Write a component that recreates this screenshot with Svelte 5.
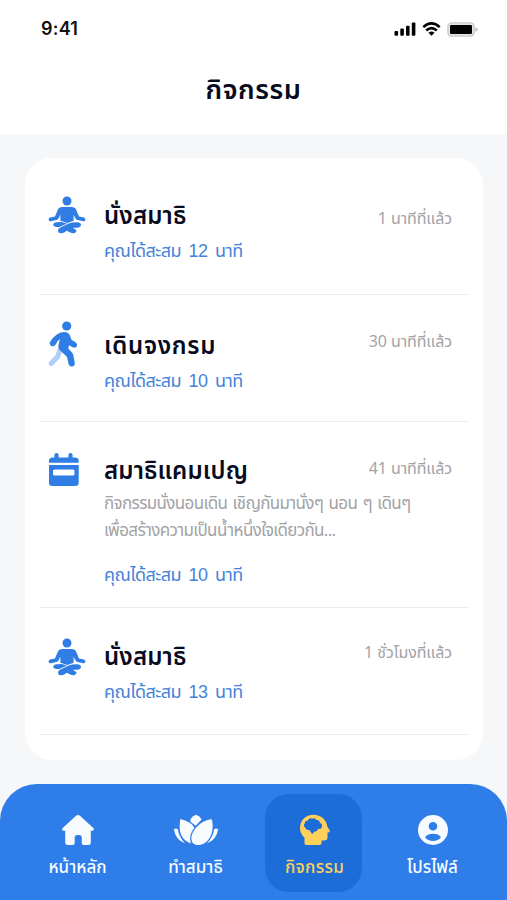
<script>
  const activities = [
    { icon: 'meditate', title: 'นั่งสมาธิ', time: '1 นาทีที่แล้ว', total: 'คุณได้สะสม 12 นาที', size: 'first' },
    { icon: 'walk', title: 'เดินจงกรม', time: '30 นาทีที่แล้ว', total: 'คุณได้สะสม 10 นาที', size: 'second' },
    {
      icon: 'calendar',
      title: 'สมาธิแคมเปญ',
      time: '41 นาทีที่แล้ว',
      lines: ['กิจกรรมนั่งนอนเดิน เชิญกันมานั่งๆ นอน ๆ เดินๆ', 'เพื่อสร้างความเป็นน้ำหนึ่งใจเดียวกัน...'],
      total: 'คุณได้สะสม 10 นาที',
      size: 'third'
    },
    { icon: 'meditate', title: 'นั่งสมาธิ', time: '1 ชั่วโมงที่แล้ว', total: 'คุณได้สะสม 13 นาที', size: 'fourth' }
  ];

  const tabs = [
    { id: 'home', label: 'หน้าหลัก' },
    { id: 'lotus', label: 'ทำสมาธิ' },
    { id: 'activity', label: 'กิจกรรม' },
    { id: 'profile', label: 'โปรไฟล์' }
  ];

  let current = $state('activity');
</script>

<div class="screen">
  <header>
    <div class="status-bar">
      <span class="clock">9:41</span>
      <div class="status-icons">
        <svg width="22" height="14" viewBox="0 0 22 14">
          <rect x="0.5" y="9" width="3.6" height="4.8" rx="1" />
          <rect x="6.3" y="6.5" width="3.6" height="7.3" rx="1" />
          <rect x="12" y="3.7" width="3.6" height="10.1" rx="1" />
          <rect x="17.8" y="0.5" width="3.6" height="13.3" rx="1" />
        </svg>
        <svg width="19" height="14" viewBox="0 0 19 14">
          <path d="M1.3 5.1Q9.5-2.2 17.7 5.1M4.2 8.4Q9.5 3.9 14.8 8.4" fill="none" stroke="#000" stroke-width="2.6" />
          <path d="M6.5 10.7Q9.5 8.2 12.5 10.7L9.5 13.7Z" />
        </svg>
        <svg width="31" height="15" viewBox="0 0 31 15">
          <rect x="0.9" y="0.9" width="26.2" height="13.2" rx="3.8" fill="#e4e4e4" stroke="#c9c9c9" stroke-width="1.4" />
          <rect x="3" y="3" width="22" height="9" rx="1.2" />
          <path d="M28.5 5.2Q30.7 6 30.7 7.5T28.5 9.8Z" fill="#bbb" />
        </svg>
      </div>
    </div>
    <h1>กิจกรรม</h1>
  </header>

  <main>
    <div class="card">
      {#each activities as item}
        <article class={item.size}>
          <div class="icon">
            {#if item.icon === 'meditate'}
              <svg width="38" height="38" viewBox="0 0 38 38">
                <circle cx="19" cy="5" r="4.5" />
                <path d="M14.6 11H23.4Q27.3 11 28.4 14.2L31 20.4 36 21.6Q37.8 22.2 37.3 24 36.8 25.5 35.2 25.2L29.5 23.9Q28 23.5 27.2 22L25.6 18.8V24.8L19.5 27 12.4 24.8V18.8L10.8 22Q10 23.5 8.5 23.9L2.8 25.2Q1.2 25.5.7 24 .2 22.2 2 21.6L7 20.4 9.6 14.2Q10.7 11 14.6 11Z" />
                <path d="M8 31Q5 30.5 5.3 28.3 5.8 26.3 8.6 26.2L13.5 26 19.2 27.6 11.4 31Z" />
                <path d="M28.8 26.2Q33 26.3 33 29 32.9 31.4 29.2 31.7L24.8 31.8 28.5 34.2Q28.4 36.9 25.3 37.3 24 37.4 22.3 36.5L18.8 34.7 16.6 36.2Q15.3 37.3 12.8 37.3 10 37 10 34.5 10.1 32.5 12.4 31.5L20.8 27.6Q23.5 26.2 28.8 26.2Z" />
              </svg>
            {:else if item.icon === 'walk'}
              <svg width="30" height="46" viewBox="0 0 30 46">
                <path d="M12 29L9.6 35.8 3.4 42.3" fill="none" stroke="#b2cdf6" stroke-width="5.2" stroke-linecap="round" stroke-linejoin="round" />
                <circle cx="18.7" cy="5" r="4.6" />
                <path d="M8.5 13.8Q11.5 11 16 11 21.2 11.2 22.4 15.7L23.5 18.8 27.6 21.2Q29.8 23 28.9 25.2 27.4 27.4 24.8 26.3L21 24.2 20.2 27.4 24.2 31.8Q25 32.8 25.3 34L26.8 42Q26.9 45.1 24 45.6 21.3 45.8 20.6 43.1L18.9 35.8 11.9 29.3Q9.8 27.3 10.4 24.5L11.8 18.2Q10.7 18.7 9.8 20.1L7.3 23.9Q5.6 26.1 3.1 25 1 23.6 1.8 21.2 4.2 16.9 8.5 13.8Z" />
              </svg>
            {:else}
              <svg width="32" height="34" viewBox="0 0 32 34">
                <path d="M8.5 0Q10.6 0 10.6 2.2V4.5H20.4V2.2Q20.4 0 22.5 0T24.6 2.2V4.5H27Q30.7 4.5 30.7 8V9.8H1V8Q1 4.5 4.5 4.5H6.4V2.2Q6.4 0 8.5 0Z" />
                <path fill-rule="evenodd" d="M1 12H30.7V29.7Q30.7 33 27.4 33H4.3Q1 33 1 29.7ZM6.5 16.5Q5 16.5 5 18V21Q5 22.5 6.5 22.5H25Q26.5 22.5 26.5 21V18Q26.5 16.5 25 16.5Z" />
              </svg>
            {/if}
          </div>
          <div class="content">
            <div class="heading">
              <h2>{item.title}</h2>
              <time>{item.time}</time>
            </div>
            {#if item.lines}
              <div class="description">
                {#each item.lines as line}
                  <p>{line}</p>
                {/each}
              </div>
            {/if}
            <p class="total">{item.total}</p>
          </div>
        </article>
      {/each}
    </div>
  </main>

  <nav>
    {#each tabs as tab}
      <button type="button" class={tab.id} class:active={current === tab.id} onclick={() => (current = tab.id)}>
        {#if tab.id === 'home'}
          <svg width="34" height="32" viewBox="0 0 34 32">
            <path d="M15 1.7Q17 .1 19 1.7L32.3 14Q34 16 31.5 16.7H29.8V28.5Q29.8 31 27.3 31H22.6Q20.8 31 20.8 29.2V23.8Q20.8 21 18 21H16.3Q13.7 21 13.7 23.8V29.2Q13.7 31 11.9 31H6.7Q4.2 31 4.2 28.5V16.7H2.5Q0 16 1.7 14Z" />
          </svg>
        {:else if tab.id === 'lotus'}
          <svg width="46" height="32" viewBox="0 0 46 32">
            <path d="M17.4 5.5Q19 2 23 .7 27 2 28.6 5.5L25.5 8.7 22.8 11.8 17.4 7.8Z" />
            <path d="M8.2 5.2C14.6 6.7 19.6 10 21.4 13.8 17.6 18.6 16.2 23.6 18 29.6 10.2 26.4 6.4 20.3 6.7 13.2L7 6.3Q7.1 5 8.2 5.2Z" />
            <path d="M37.5 5.3Q39 5 39.2 6.4C41.4 19.4 36 29.5 26 31 15.6 31.4 17 19.5 23.7 12.9 27.7 8.8 32.6 6.2 37.5 5.3Z" />
            <path d="M.8 15.3Q3 14 4.9 15.2 5.7 22.6 12 29.3 2.7 26.5.8 15.3ZM45.2 15.3Q43 14 41.1 15.2 40.3 22.6 34 29.3 43.3 26.5 45.2 15.3Z" />
          </svg>
        {:else if tab.id === 'activity'}
          <svg width="32" height="32" viewBox="0 0 32 32">
            <path fill-rule="evenodd" d="M14.3.8C22 .8 27.5 5.8 28.2 12.2L31 17Q31.3 18.3 28.5 18.7V23.2Q28.5 26.5 25.2 26.5H22.5V28.5Q22.5 31 20 31H7.2Q5.5 31 5.5 29.3V23.6Q1 19.8 1 14.3C1 6.5 6.6.8 14.3.8ZM13.6 4.6Q10.2 3.6 8.8 6.4 5.8 6.4 5.8 9.3 3.8 12.1 6.5 14.1 7.1 16.2 10 15.9 11.3 16.1 11.4 17.7L13 19.8H14.2L14.8 17.8Q18.5 17.9 18.9 14.8 22.6 15.7 22.8 12.7 24 9.9 21 8.9 20.5 5.7 17.5 6 16.1 3.2 13.6 4.6Z" />
          </svg>
        {:else}
          <svg width="32" height="32" viewBox="0 0 32 32">
            <path fill-rule="evenodd" d="M16 1A15 15 0 1 1 16 31 15 15 0 0 1 16 1ZM16 7.9A4.3 4.3 0 1 0 16 16.5 4.3 4.3 0 0 0 16 7.9ZM16 19.8Q10.5 19.8 8 23.2 11 27 16 27T24 23.2Q21.5 19.8 16 19.8Z" />
          </svg>
        {/if}
        <span>{tab.label}</span>
      </button>
    {/each}
  </nav>
</div>

<style>
  :global(body) {
    margin: 0;
  }

  .screen {
    display: flex;
    flex-direction: column;
    width: 507px;
    height: 900px;
    overflow: hidden;
    background: #f5f7f9;
    font-family: 'Noto Sans Thai', 'Noto Sans', sans-serif;
  }

  header {
    height: 134px;
    flex: none;
    background: #fff;
  }

  .status-bar {
    display: flex;
    justify-content: space-between;
    align-items: center;
    height: 58px;
    padding: 0 29px 0 41px;
    box-sizing: border-box;
  }

  .clock {
    color: #111;
    font: 600 18px/20px Inter, sans-serif;
    letter-spacing: 0.2px;
  }

  .status-icons {
    display: flex;
    align-items: center;
    gap: 6px;
  }

  h1,
  h2,
  p {
    margin: 0;
    white-space: nowrap;
  }

  h1 {
    color: #080b20;
    font-size: 27px;
    font-weight: 600;
    line-height: 66px;
    letter-spacing: 0.6px;
    text-align: center;
  }

  main {
    flex: 1;
    padding: 24px 24px 0 25px;
  }

  .card {
    height: 602px;
    padding: 0 14px 0 15px;
    box-sizing: border-box;
    background: #fff;
    border-radius: 27px;
  }

  article {
    display: flex;
    box-sizing: border-box;
    border-bottom: 1px solid #ebecee;
  }

  .first {
    height: 137px;
    padding-top: 38px;
  }

  .second {
    height: 127px;
    padding-top: 31px;
  }

  .third {
    height: 186px;
    padding-top: 29px;
  }

  .fourth {
    height: 127px;
    padding-top: 29px;
  }

  .icon {
    width: 57px;
    flex: none;
    padding-left: 8px;
    box-sizing: border-box;
    fill: #2f7de5;
  }

  .second .icon {
    margin-top: -5px;
  }

  .third .icon {
    margin-top: 2px;
  }

  .fourth .icon {
    margin-top: 1px;
  }

  .content {
    flex: 1;
    padding: 0 17px 0 7px;
  }

  .heading {
    display: flex;
    justify-content: space-between;
    height: 40px;
  }

  h2 {
    color: #080b20;
    font-size: 24px;
    font-weight: 600;
    line-height: 42px;
    letter-spacing: 0.15px;
  }

  .second h2 {
    letter-spacing: 0.7px;
  }

  time {
    color: #a2a3a5;
    font-size: 16px;
    line-height: 46px;
    letter-spacing: -0.1px;
    white-space: nowrap;
  }

  .second time,
  .fourth time {
    line-height: 32px;
  }

  .third time {
    line-height: 37px;
  }

  .total {
    color: #4583d9;
    font-family: 'Liberation Sans', 'Noto Sans Thai', 'Noto Sans', sans-serif;
    font-size: 18px;
    line-height: 30px;
    letter-spacing: -0.55px;
    word-spacing: 3px;
  }

  .description {
    height: 69px;
    color: #a2a3a5;
    font-size: 17px;
    line-height: 27px;
    letter-spacing: -0.65px;
    word-spacing: 1.5px;
  }

  nav {
    display: flex;
    height: 116px;
    flex: none;
    padding: 10px 22px 0 29px;
    gap: 21px;
    box-sizing: border-box;
    background: #2e7de9;
    border-radius: 37px 37px 0 0;
  }

  button {
    display: flex;
    flex-direction: column;
    align-items: center;
    width: 97px;
    flex: none;
    height: 98px;
    padding: 20px 0 0;
    box-sizing: border-box;
    border: 0;
    border-radius: 24px;
    background: none;
    color: #f7fbff;
    fill: currentColor;
    font: 500 17px/30px 'Noto Sans Thai', 'Noto Sans', sans-serif;
    white-space: nowrap;
  }

  button svg {
    display: block;
    margin-bottom: 7px;
  }

  .profile,
  .active {
    padding-left: 2px;
  }

  .active {
    background: #1c6dd8;
    color: #ffd05a;
  }

  .active span {
    letter-spacing: 0.3px;
  }
</style>
